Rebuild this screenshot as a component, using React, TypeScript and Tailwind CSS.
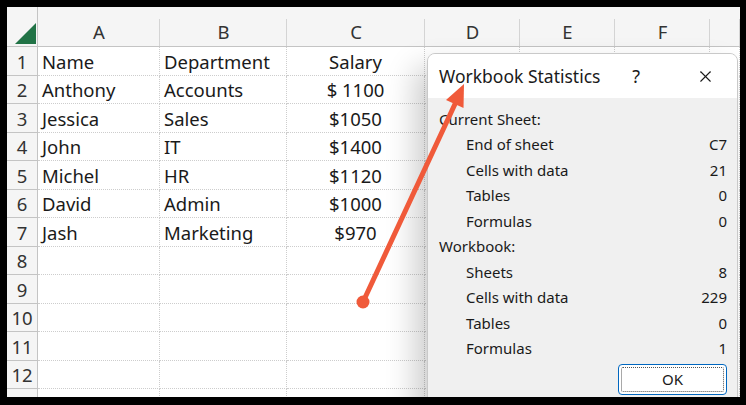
import { X } from "lucide-react";

const cols = ["A", "B", "C", "D", "E", "F", ""];

const rows: string[][] = [
  ["Name", "Department", "Salary"],
  ["Anthony", "Accounts", "$ 1100"],
  ["Jessica", "Sales", "$1050"],
  ["John", "IT", "$1400"],
  ["Michel", "HR", "$1120"],
  ["David", "Admin", "$1000"],
  ["Jash", "Marketing", "$970"],
  [], [], [], [], [], [],
];

const currentSheet = [
  ["End of sheet", "C7"],
  ["Cells with data", "21"],
  ["Tables", "0"],
  ["Formulas", "0"],
];

const workbook = [
  ["Sheets", "8"],
  ["Cells with data", "229"],
  ["Tables", "0"],
  ["Formulas", "1"],
];

const font = "font-['Noto_Sans','Open_Sans',sans-serif]";

function StatRow({ label, value }: { label: string; value: string }) {
  return (
    <div className="h-[25.5px] flex items-center justify-between pl-[38px] pr-[10px]">
      <span>{label}</span>
      <span>{value}</span>
    </div>
  );
}

export default function App() {
  return (
    <div className={`w-[746px] h-[405px] bg-black relative pt-[7px] pl-[7px] ${font}`}>
      <div className="w-[733px] h-[390px] bg-white relative overflow-hidden">
        {/* sheet */}
        <div className="grid grid-cols-[31px_122px_127px_138px_95px_95px_95px_1fr] grid-rows-[40px_repeat(13,28.5px)] text-[18.5px] text-[#1a1a1a]">
          <div className="bg-[#f5f5f5] border-r border-b border-[#c4c4c4] relative">
            <svg className="absolute left-[8px] top-[16px]" width="21" height="21" viewBox="0 0 21 21">
              <polygon points="21,0 21,21 0,21" fill="#217346" />
            </svg>
          </div>
          {cols.map((c, i) => (
            <div
              key={i}
              className="bg-[#f5f5f5] border-b border-[#c4c4c4] flex items-end justify-center text-[#333] relative"
            >
              {c}
              <span className="absolute right-0 top-[12px] bottom-0 w-px bg-[#d4d4d4]" />
            </div>
          ))}
          {rows.map((r, ri) => (
            <>
              <div
                key={`h${ri}`}
                className="bg-[#f5f5f5] border-r border-b border-[#c4c4c4] flex items-center justify-center pt-[2px] text-[#333]"
              >
                {ri < 12 ? ri + 1 : ""}
              </div>
              {cols.map((_, ci) => (
                <div
                  key={`${ri}-${ci}`}
                  className={`border-r border-b border-dotted border-[#cdcdcd] flex items-center px-[4px] pt-[2px] whitespace-nowrap ${
                    ci === 2 ? "justify-center" : ""
                  }`}
                >
                  {r[ci] ?? ""}
                </div>
              ))}
            </>
          ))}
        </div>

        {/* dialog */}
        <div className="absolute left-[420px] top-[46px] w-[311px] h-[360px] rounded-t-[8px] border border-[#c9c9c9] bg-[#f0f0f0] shadow-[-12px_14px_30px_rgba(0,0,0,0.2)] overflow-hidden text-[15px] text-[#1a1a1a]">
          <div className="h-[44px] bg-white flex items-center pl-[11px] pr-[22px]">
            <span className="text-[17.5px] flex-1">Workbook Statistics</span>
            <span className="text-[18px] mr-[56px]">?</span>
            <X size={19} strokeWidth={1.4} className="text-[#1a1a1a]" />
          </div>
          <div className="pt-[8px]">
            <div className="h-[25.5px] flex items-center pl-[11px]">Current Sheet:</div>
            {currentSheet.map(([l, v]) => (
              <StatRow key={l} label={l} value={v} />
            ))}
            <div className="h-[25.5px] flex items-center pl-[11px]">Workbook:</div>
            {workbook.map(([l, v]) => (
              <StatRow key={l + v} label={l} value={v} />
            ))}
            <div className="flex justify-end pr-[10px] mt-[3px]">
              <div className="w-[109px] h-[31px] rounded-[4px] border border-[#0067c0] bg-white p-[2px]">
                <div className="w-full h-full border border-dotted border-[#555] rounded-[2px] flex items-center justify-center">
                  OK
                </div>
              </div>
            </div>
          </div>
        </div>
      </div>

      {/* annotation arrow */}
      <svg className="absolute left-0 top-0 pointer-events-none" width="746" height="405" viewBox="0 0 746 405">
        <line x1="363" y1="302" x2="455" y2="104" stroke="#f05a3a" strokeWidth="5" strokeLinecap="round" />
        <circle cx="363" cy="302" r="6.5" fill="#f05a3a" />
        <polygon points="464,84 463.5,108 446,100" fill="#f05a3a" />
      </svg>
    </div>
  );
}
